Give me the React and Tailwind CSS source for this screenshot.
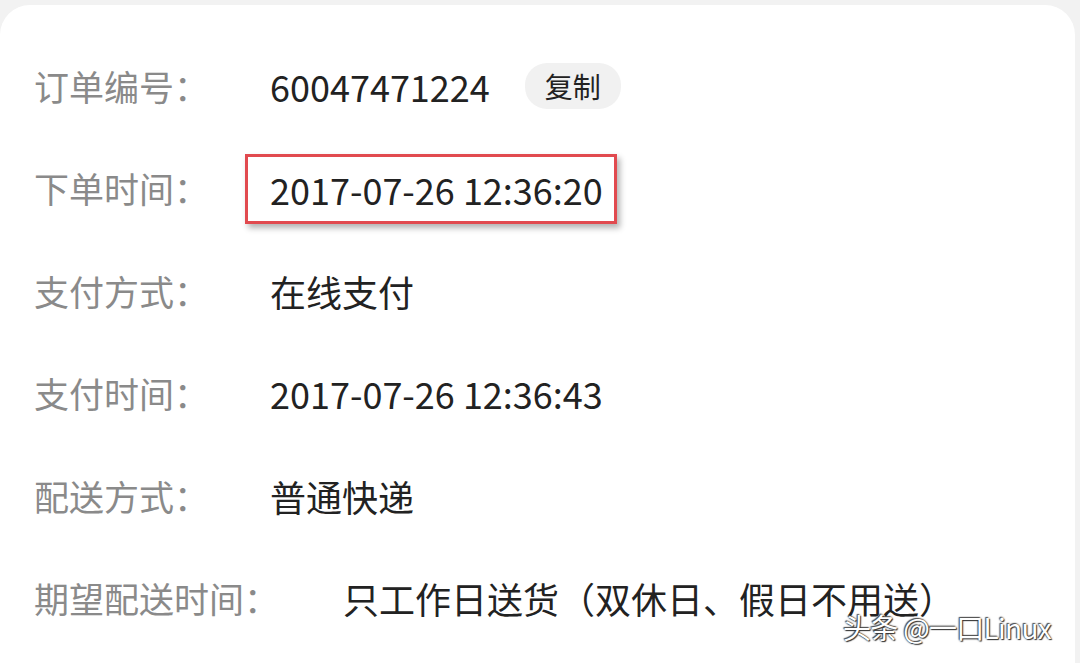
import React from 'react';

const rows = [
  { label: '订单编号：', value: '60047471224', copy: true },
  { label: '下单时间：', value: '2017-07-26 12:36:20', boxed: true },
  { label: '支付方式：', value: '在线支付' },
  { label: '支付时间：', value: '2017-07-26 12:36:43' },
  { label: '配送方式：', value: '普通快递' },
  { label: '期望配送时间：', value: '只工作日送货（双休日、假日不用送）', wide: true },
];

function App() {
  return (
    <div
      className="relative w-[1080px] h-[663px] overflow-hidden bg-[#f2f2f2] pt-[5px] pr-[5px]"
      style={{ fontFamily: '"Noto Sans CJK SC", "Noto Sans", sans-serif' }}
    >
      <div className="h-[700px] bg-white rounded-tl-[30px] rounded-tr-[30px] pt-[30px]">
        {rows.map((row) => (
          <div key={row.label} className="flex items-center h-[102.4px] pl-[34px]">
            <div className={row.wide ? 'w-[309px] text-[35px] text-[#8a8a8a]' : 'w-[236px] text-[35px] text-[#8a8a8a]'}>
              {row.label}
            </div>
            {row.boxed ? (
              <div className="-ml-[25px] border-[3px] border-[#e14a4f] pl-[22px] pr-[11px] h-[70px] flex items-center shadow-[3px_4px_6px_rgba(0,0,0,0.3)]">
                <span className="text-[36px] text-[#222]">{row.value}</span>
              </div>
            ) : (
              <span className="text-[36px] text-[#222]">{row.value}</span>
            )}
            {row.copy && (
              <span className="ml-[35px] h-[46px] w-[96px] flex items-center justify-center rounded-[22px] bg-[#f1f1f1] text-[28px] text-[#222]">
                复制
              </span>
            )}
          </div>
        ))}
      </div>
      <div
        className="absolute left-[843px] top-[606px] text-[28px] text-white tracking-tight"
        style={{ textShadow: '0 0 2px #333, 1px 1px 1px #333, -1px -1px 1px #555' }}
      >
        头条 @一口Linux
      </div>
    </div>
  );
}

export default App;
